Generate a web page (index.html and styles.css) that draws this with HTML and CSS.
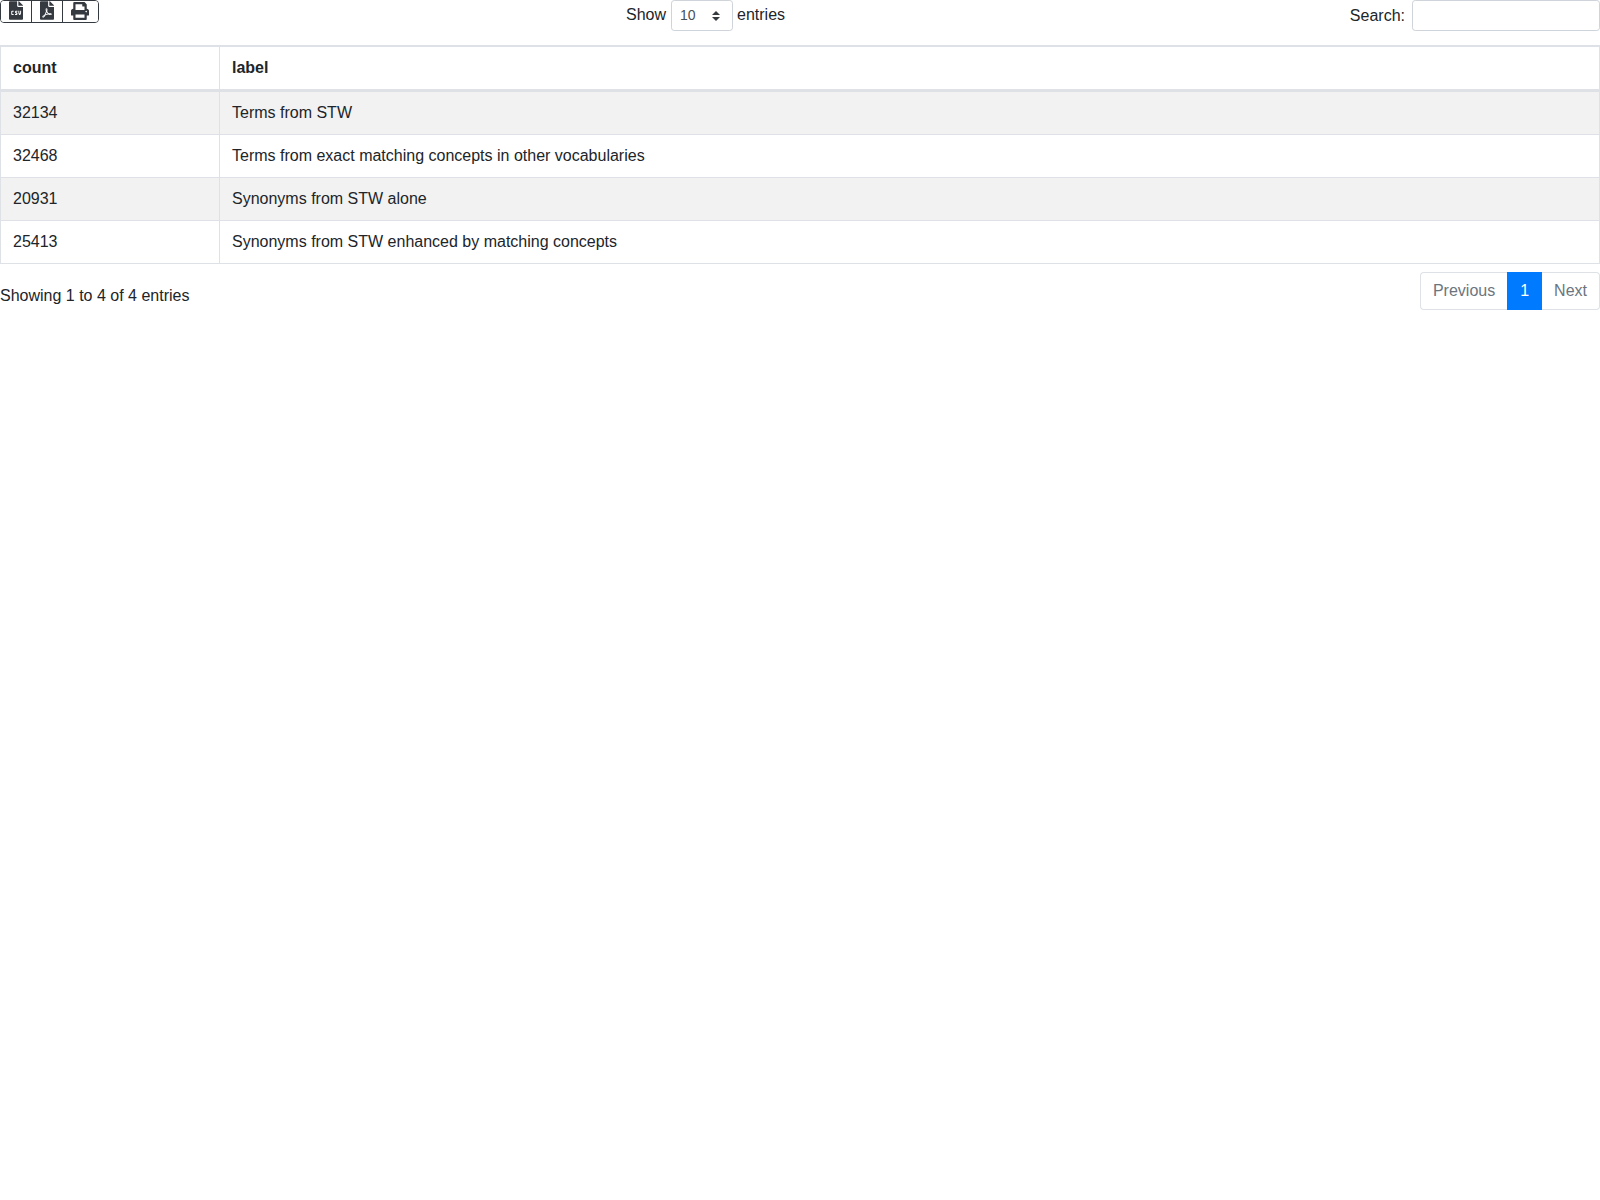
FILE: index.html
```html
<!DOCTYPE html>
<html lang="en">
<head>
<meta charset="utf-8">
<title>Table</title>
<link rel="stylesheet" href="styles.css">
</head>
<body>
<div class="toolbar">
  <div class="tool-col">
    <div class="btn-group">
      <button class="tool-btn" title="CSV">
        <svg class="ico ico-file" viewBox="0 0 384 512"><path fill-rule="evenodd" d="M224 136V0H24C10.700 0 0 10.700 0 24v464c0 13.300 10.700 24 24 24h336c13.300 0 24-10.700 24-24V160H248c-13.200 0-24-10.800-24-24zM384 121.900V128H256V0h6.100c6.400 0 12.500 2.500 17 7l97.900 98c4.500 4.500 7 10.600 7 16.900z"/><path fill="#fff" d="M85 262h42v26H95c-4 0-6 2-6 6v52c0 4 2 6 6 6h32v26H85c-14 0-24-10-24-24v-68c0-14 10-24 24-24zM196 262h34v26h-34c-4 0-5 7 0 9l20 12c14 9 16 22 16 33 0 20-11 36-30 36h-36v-26h36c5 0 5-8 1-10l-20-12c-13-8-18-20-18-32 0-20 13-36 31-36zM256 262h26v40c0 18 7 32 12 40 6-8 12-22 12-40v-40h26v40c0 34-14 60-26 76h-24c-12-16-26-42-26-76z"/></svg>
      </button>
      <button class="tool-btn" title="PDF">
        <svg class="ico ico-file" viewBox="0 0 384 512"><path fill-rule="evenodd" d="M181.900 256.100c-5-16-4.900-46.900-2-46.900 8.400 0 7.600 36.900 2 46.900zm-1.700 47.200c-7.700 20.200-17.300 43.300-28.400 62.700 18.300-7 39-17.200 62.900-21.900-12.700-9.600-24.900-23.400-34.500-40.800zM86.100 428.100c0 .8 13.200-5.400 34.900-40.200-6.700 6.300-29.100 24.500-34.900 40.200zM248 160h136v328c0 13.300-10.700 24-24 24H24c-13.300 0-24-10.700-24-24V24C0 10.700 10.700 0 24 0h200v136c0 13.200 10.800 24 24 24zm-8 171.800c-20-12.200-33.300-29-42.700-53.800 4.500-18.500 11.600-46.600 6.200-64.200-4.700-29.400-42.400-26.500-47.800-6.800-5 18.300-.4 44.100 8.100 77-11.600 27.600-28.700 64.600-40.800 85.800-.1 0-.1.100-.2.100-27.100 13.900-73.600 44.500-54.500 68 5.600 6.900 16 10 21.500 10 17.900 0 35.700-18 61.100-61.800 25.800-8.500 54.100-19.100 79-23.200 21.700 11.800 47.100 19.500 64 19.500 29.200 0 31.200-32 19.700-43.400-13.900-13.600-54.300-9.700-73.600-7.200zM377 105L279 7c-4.500-4.500-10.600-7-17-7h-6v128h128v-6.100c0-6.300-2.500-12.400-7-16.900zm-74.100 255.300c4.100-2.700-2.500-11.900-42.800-9 37.100 15.800 42.800 9 42.800 9z"/></svg>
      </button>
      <button class="tool-btn tool-btn-wide" title="Print">
        <svg class="ico ico-print" viewBox="0 0 512 512"><path d="M448 192V77.250c0-8.490-3.370-16.620-9.370-22.630L393.370 9.370c-6-6-14.140-9.370-22.630-9.370H96C78.330 0 64 14.330 64 32v160c-35.350 0-64 28.650-64 64v112c0 8.840 7.160 16 16 16h48v96c0 17.670 14.330 32 32 32h320c17.670 0 32-14.330 32-32v-96h48c8.840 0 16-7.160 16-16V256c0-35.350-28.650-64-64-64zm-64 256H128v-96h256v96zm0-224H128V64h192v48c0 8.840 7.160 16 16 16h48v96zm48 72c-13.250 0-24-10.750-24-24 0-13.260 10.750-24 24-24s24 10.740 24 24c0 13.250-10.750 24-24 24z"/></svg>
      </button>
    </div>
  </div>
  <div class="length-col">
    <label class="length-label">Show
      <span class="select-box">
        <span class="select-value">10</span>
        <svg class="select-arrows" viewBox="0 0 8 10"><path d="M4 0L8 4H0zM4 10L0 6H8z"/></svg>
      </span>
      entries</label>
  </div>
  <div class="search-col">
    <label class="search-label">Search:
      <input class="search-input" type="search">
    </label>
  </div>
</div>
<table class="data-table">
  <colgroup><col class="col-count"><col></colgroup>
  <thead>
    <tr><th>count</th><th>label</th></tr>
  </thead>
  <tbody>
    <tr class="odd"><td>32134</td><td>Terms from STW</td></tr>
    <tr><td>32468</td><td>Terms from exact matching concepts in other vocabularies</td></tr>
    <tr class="odd"><td>20931</td><td>Synonyms from STW alone</td></tr>
    <tr><td>25413</td><td>Synonyms from STW enhanced by matching concepts</td></tr>
  </tbody>
</table>
<div class="footer">
  <div class="info">Showing 1 to 4 of 4 entries</div>
  <ul class="pagination">
    <li class="page page-first">Previous</li>
    <li class="page page-active">1</li>
    <li class="page page-last">Next</li>
  </ul>
</div>
</body>
</html>
```
FILE: styles.css
```css
* { box-sizing: border-box; }
html, body { margin: 0; padding: 0; background: #fff; }
body {
  font-family: Arial, "Liberation Sans", sans-serif;
  font-size: 16px;
  line-height: 1.5;
  color: #212529;
}
.toolbar {
  display: grid;
  grid-template-columns: 626px auto 1fr;
  height: 45px;
  align-items: start;
}
.btn-group {
  display: inline-flex;
  height: 23px;
  border: 1px solid #343a40;
  border-radius: 4px;
  overflow: hidden;
  background: #fff;
}
.tool-btn {
  width: 31px;
  padding: 0 0 2px;
  border: 0;
  border-right: 1px solid #343a40;
  background: #fff;
  display: flex;
  align-items: center;
  justify-content: center;
}
.tool-btn-wide { width: 35px; border-right: 0; padding-right: 1px; }
.ico { display: block; fill: #343a40; }
.ico-file { width: 14px; height: 19px; }
.ico-print { width: 18px; height: 18px; }
.length-label {
  display: inline-flex;
  align-items: flex-start;
  gap: 5px;
  height: 31px;
  line-height: 29px;
}
.select-box {
  display: inline-flex;
  align-items: center;
  justify-content: space-between;
  width: 62px;
  height: 31px;
  margin-right: -1px;
  padding: 0 12px 0 8px;
  border: 1px solid #ced4da;
  border-radius: 3.2px;
  font-size: 14px;
  color: #495057;
}
.select-arrows { width: 8px; height: 10px; fill: #343a40; }
.search-col { text-align: right; }
.search-label { display: inline-flex; align-items: center; gap: 7px; height: 31px; }
.search-input {
  width: 188px;
  height: 31px;
  padding: 4px 8px;
  border: 1px solid #ced4da;
  border-radius: 3.2px;
  background: #fff;
}
.data-table {
  width: 100%;
  border-collapse: separate;
  border-spacing: 0;
  table-layout: fixed;
  border: 1px solid #dee2e6;
}
.col-count { width: 219px; }
.data-table th, .data-table td {
  padding: 9px 12px;
  border-top: 1px solid #dee2e6;
  border-right: 1px solid #dee2e6;
  text-align: left;
  vertical-align: top;
}
.data-table tr > :last-child { border-right: 0; }
.data-table th { font-weight: 700; border-bottom: 2px solid #dee2e6; }
.data-table tr.odd td { background: #f2f2f2; }
.footer {
  display: flex;
  justify-content: space-between;
  align-items: flex-start;
  margin-top: 8px;
}
.info { padding-top: 12px; }
.pagination {
  display: flex;
  list-style: none;
  margin: 0;
  padding: 0;
}
.page {
  padding: 6px 12px;
  height: 38px;
  border: 1px solid #dee2e6;
  color: #6c757d;
  background: #fff;
}
.page-first { border-radius: 4px 0 0 4px; border-right: 0; }
.page-active { background: #007bff; border-color: #007bff; color: #fff; }
.page-last { border-radius: 0 4px 4px 0; border-left: 0; }
```
